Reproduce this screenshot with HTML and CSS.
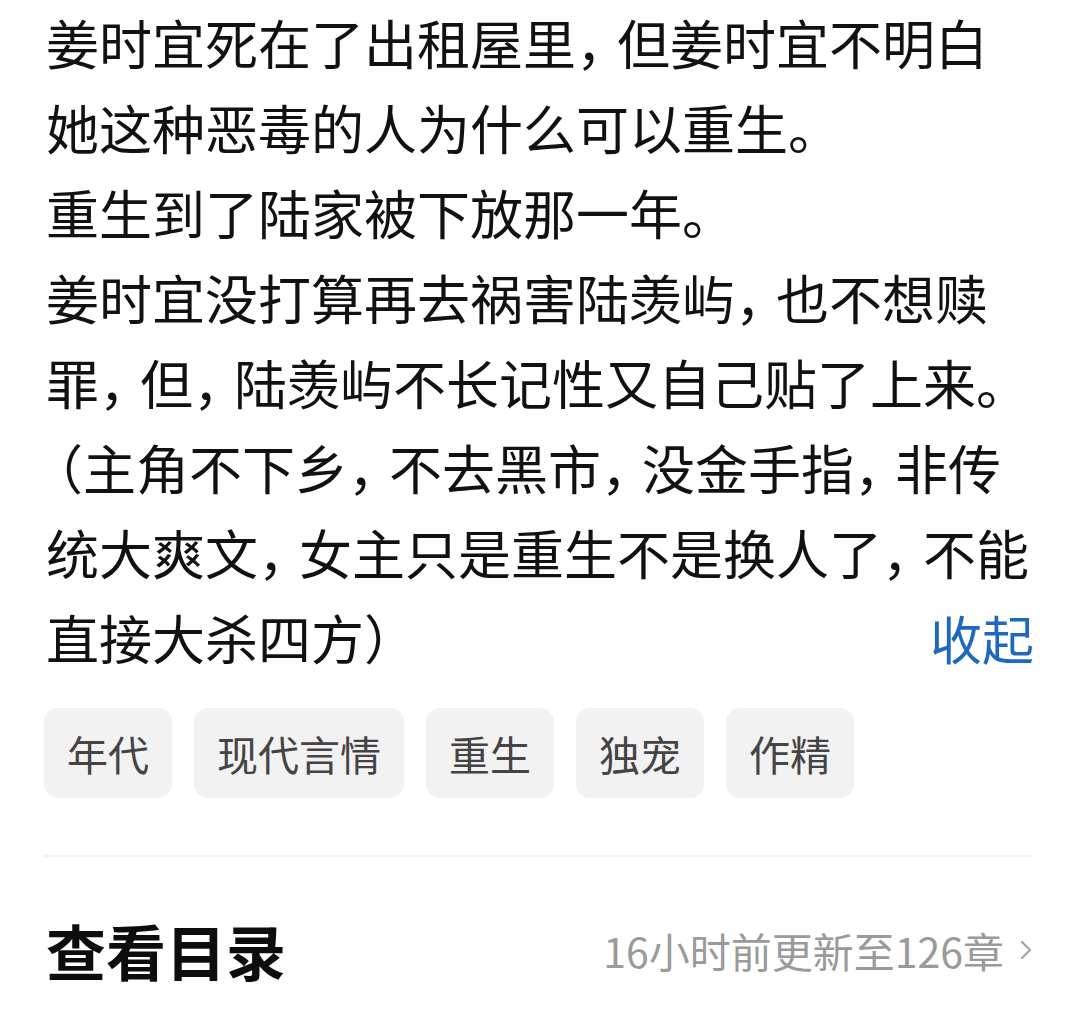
FILE: index.html
```html
<!DOCTYPE html>
<html lang="zh-CN">
<head>
<meta charset="utf-8">
<title>作品简介</title>
<link rel="stylesheet" href="styles.css">
</head>
<body>
<main class="detail">
  <p class="intro">
    <span class="line">姜时宜死在了出租屋里<span class="pc">，</span>但姜时宜不明白</span>
    <span class="line">她这种恶毒的人为什么可以重生。</span>
    <span class="line">重生到了陆家被下放那一年。</span>
    <span class="line">姜时宜没打算再去祸害陆羡屿<span class="pc">，</span>也不想赎</span>
    <span class="line">罪<span class="pc">，</span>但<span class="pc">，</span>陆羡屿不长记性又自己贴了上来。</span>
    <span class="line"><span class="po">（</span>主角不下乡<span class="pc">，</span>不去黑市<span class="pc">，</span>没金手指<span class="pc">，</span>非传</span>
    <span class="line">统大爽文<span class="pc">，</span>女主只是重生不是换人了<span class="pc">，</span>不能</span>
    <span class="line line-last"><span>直接大杀四方）</span><a class="toggle">收起</a></span>
  </p>

  <ul class="tags">
    <li class="tag">年代</li>
    <li class="tag">现代言情</li>
    <li class="tag">重生</li>
    <li class="tag">独宠</li>
    <li class="tag">作精</li>
  </ul>

  <hr class="divider">

  <div class="toc">
    <h2 class="toc-title">查看目录</h2>
    <span class="toc-meta">16小时前更新至126章
      <svg class="chev" width="12" height="20" viewBox="0 0 12 20" aria-hidden="true">
        <polyline points="2,2 10,10 2,18" fill="none" stroke="#a6a6a6" stroke-width="2.2" stroke-linecap="round" stroke-linejoin="round"/>
      </svg>
    </span>
  </div>
</main>
</body>
</html>
```

FILE: styles.css
```css
html, body {
  margin: 0;
  padding: 0;
  background: #ffffff;
  overflow: hidden;
}

body {
  font-family: "Noto Sans CJK SC", "Noto Sans", sans-serif;
  color: #111111;
}

.detail {
  padding: 0 46px;
}

/* synopsis */
.intro {
  margin: 0;
  font-size: 53px;
  line-height: 85px;
}

.line {
  display: block;
  white-space: nowrap;
}

/* compressed full-width comma */
.pc {
  letter-spacing: -12px;
}

/* opening bracket at line start, pulled into the margin */
.po {
  margin-left: -16px;
}

.line-last {
  display: flex;
  justify-content: space-between;
}

.toggle {
  color: #1f68bf;
  text-decoration: none;
  font-size: 52px;
}

/* tags */
.tags {
  list-style: none;
  margin: 28px 0 0 -2px;
  padding: 0;
  display: flex;
  gap: 22px;
}

.tag {
  height: 90px;
  padding: 0 23px;
  border-radius: 14px;
  background: #f2f2f2;
  color: #444444;
  font-size: 41px;
  display: flex;
  align-items: center;
}

.divider {
  margin: 57px 0 0 -2px;
  border: 0;
  height: 2px;
  background: #f3f3f3;
}

/* table of contents row */
.toc {
  margin-top: 58px;
  height: 70px;
  display: flex;
  align-items: center;
  justify-content: space-between;
}

.toc-title {
  margin: 0;
  font-size: 60px;
  font-weight: 700;
  color: #0d0d0d;
  line-height: 70px;
}

.toc-meta {
  display: flex;
  align-items: center;
  gap: 16px;
  font-size: 41px;
  color: #9a9a9a;
}

.chev {
  display: block;
  margin-right: 2px;
}
```
